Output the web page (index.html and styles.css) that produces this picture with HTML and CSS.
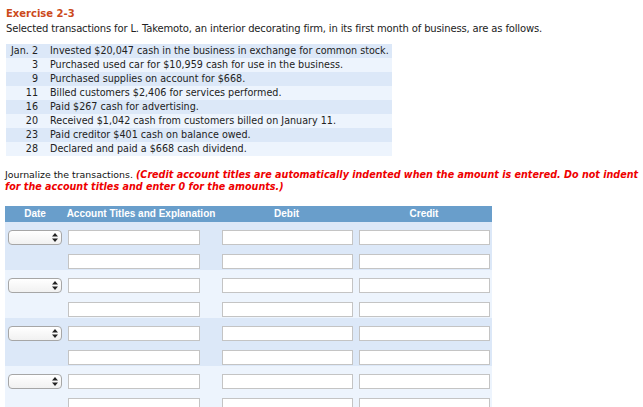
FILE: index.html
```html
<!DOCTYPE html>
<html>
<head>
<meta charset="utf-8">
<link rel="stylesheet" href="styles.css">
</head>
<body>
<div class="page">
  <div class="title">Exercise 2-3</div>
  <div class="desc">Selected transactions for L. Takemoto, an interior decorating firm, in its first month of business, are as follows.</div>
  <div class="trans">
    <div class="trow"><span class="tdate">Jan. 2</span><span class="ttext">Invested $20,047 cash in the business in exchange for common stock.</span></div>
    <div class="trow"><span class="tdate">3</span><span class="ttext">Purchased used car for $10,959 cash for use in the business.</span></div>
    <div class="trow"><span class="tdate">9</span><span class="ttext">Purchased supplies on account for $668.</span></div>
    <div class="trow"><span class="tdate">11</span><span class="ttext">Billed customers $2,406 for services performed.</span></div>
    <div class="trow"><span class="tdate">16</span><span class="ttext">Paid $267 cash for advertising.</span></div>
    <div class="trow"><span class="tdate">20</span><span class="ttext">Received $1,042 cash from customers billed on January 11.</span></div>
    <div class="trow"><span class="tdate">23</span><span class="ttext">Paid creditor $401 cash on balance owed.</span></div>
    <div class="trow"><span class="tdate">28</span><span class="ttext">Declared and paid a $668 cash dividend.</span></div>
  </div>
  <div class="instr">
    <div class="iline"><span class="plain">Journalize the transactions.</span> <span class="red">(Credit account titles are automatically indented when the amount is entered. Do not indent</span></div>
    <div class="iline"><span class="red">for the account titles and enter 0 for the amounts.)</span></div>
  </div>
  <div class="journal">
    <div class="jhead">
      <div>Date</div><div>Account Titles and Explanation</div><div>Debit</div><div>Credit</div>
    </div>
    <div class="group dark">
      <div class="jrow"><div class="c1"><div class="sel"><svg width="6" height="9" viewBox="0 0 6 9"><path d="M3 0 L6 3.5 L0 3.5 Z M0 5.5 L6 5.5 L3 9 Z" fill="#222"/></svg></div></div><div class="c2"><div class="inp"></div></div><div class="c3"><div class="inp"></div></div><div class="c4"><div class="inp"></div></div></div>
      <div class="jrow"><div class="c1"></div><div class="c2"><div class="inp"></div></div><div class="c3"><div class="inp"></div></div><div class="c4"><div class="inp"></div></div></div>
    </div>
    <div class="group light">
      <div class="jrow"><div class="c1"><div class="sel"><svg width="6" height="9" viewBox="0 0 6 9"><path d="M3 0 L6 3.5 L0 3.5 Z M0 5.5 L6 5.5 L3 9 Z" fill="#222"/></svg></div></div><div class="c2"><div class="inp"></div></div><div class="c3"><div class="inp"></div></div><div class="c4"><div class="inp"></div></div></div>
      <div class="jrow"><div class="c1"></div><div class="c2"><div class="inp"></div></div><div class="c3"><div class="inp"></div></div><div class="c4"><div class="inp"></div></div></div>
    </div>
    <div class="group dark">
      <div class="jrow"><div class="c1"><div class="sel"><svg width="6" height="9" viewBox="0 0 6 9"><path d="M3 0 L6 3.5 L0 3.5 Z M0 5.5 L6 5.5 L3 9 Z" fill="#222"/></svg></div></div><div class="c2"><div class="inp"></div></div><div class="c3"><div class="inp"></div></div><div class="c4"><div class="inp"></div></div></div>
      <div class="jrow"><div class="c1"></div><div class="c2"><div class="inp"></div></div><div class="c3"><div class="inp"></div></div><div class="c4"><div class="inp"></div></div></div>
    </div>
    <div class="group light">
      <div class="jrow"><div class="c1"><div class="sel"><svg width="6" height="9" viewBox="0 0 6 9"><path d="M3 0 L6 3.5 L0 3.5 Z M0 5.5 L6 5.5 L3 9 Z" fill="#222"/></svg></div></div><div class="c2"><div class="inp"></div></div><div class="c3"><div class="inp"></div></div><div class="c4"><div class="inp"></div></div></div>
      <div class="jrow"><div class="c1"></div><div class="c2"><div class="inp"></div></div><div class="c3"><div class="inp"></div></div><div class="c4"><div class="inp"></div></div></div>
    </div>
  </div>
</div>
</body>
</html>
```
FILE: styles.css
```css
html, body {
  margin: 0;
  padding: 0;
  background: #fff;
  overflow: hidden;
}
.page {
  width: 643px;
  height: 407px;
  overflow: hidden;
  padding: 6px 0 0 6px;
  box-sizing: border-box;
  font-family: "DejaVu Sans", Verdana, sans-serif;
  color: #222;
}
.title {
  font-size: 10px;
  font-weight: bold;
  color: #cc4a1b;
  line-height: 13px;
  height: 13px;
  margin-top: 1px;
}
.desc {
  font-size: 10px;
  letter-spacing: -0.15px;
  line-height: 13px;
  margin-top: 2px;
  white-space: nowrap;
}
.trans {
  margin-top: 9px;
  width: 386px;
  font-size: 9.6px;
}
.trow {
  display: flex;
  height: 14px;
  line-height: 14px;
  background: #dce8f8;
  white-space: nowrap;
}
.trow:nth-child(even) {
  background: #edf4fd;
}
.tdate {
  width: 32px;
  text-align: right;
  flex: none;
}
.ttext {
  margin-left: 12px;
}
.instr {
  margin-top: 13px;
  margin-left: -1px;
  font-size: 9.6px;
  line-height: 12px;
}
.iline {
  white-space: nowrap;
}
.plain {
  font-size: 9.4px;
  color: #111;
}
.red {
  color: #ee0000;
  font-weight: bold;
  font-style: italic;
}
.journal {
  margin-top: 13px;
  margin-left: -1px;
  width: 487px;
}
.jhead, .jrow {
  display: grid;
  grid-template-columns: 60px 152px 139px 136px;
}
.jhead {
  height: 16px;
  line-height: 16px;
  background: #699ecb;
  color: #fff;
  font-family: "Liberation Sans", Arial, sans-serif;
  font-weight: bold;
  font-size: 10px;
  text-align: center;
}
.group.dark { background: #dce8f8; }
.group.light { background: #edf4fd; }
.jrow {
  height: 24px;
}
.jrow > div {
  padding-top: 8px;
}
.c1 { padding-left: 3px; }
.c2 { padding-left: 3px; }
.c3 { padding-left: 5px; }
.c4 { padding-left: 3px; }
.inp {
  width: 131px;
  height: 15px;
  box-sizing: border-box;
  border: 1px solid #c4c4c4;
  background: #fff;
}
.c2 .inp { width: 132px; }
.sel {
  width: 54px;
  height: 15px;
  box-sizing: border-box;
  border: 1px solid #a6a6a6;
  border-radius: 4px;
  background: linear-gradient(#ffffff, #f1f1f1);
  display: flex;
  align-items: center;
  justify-content: flex-end;
  padding-right: 3px;
}
.sel svg { display: block; }
```
